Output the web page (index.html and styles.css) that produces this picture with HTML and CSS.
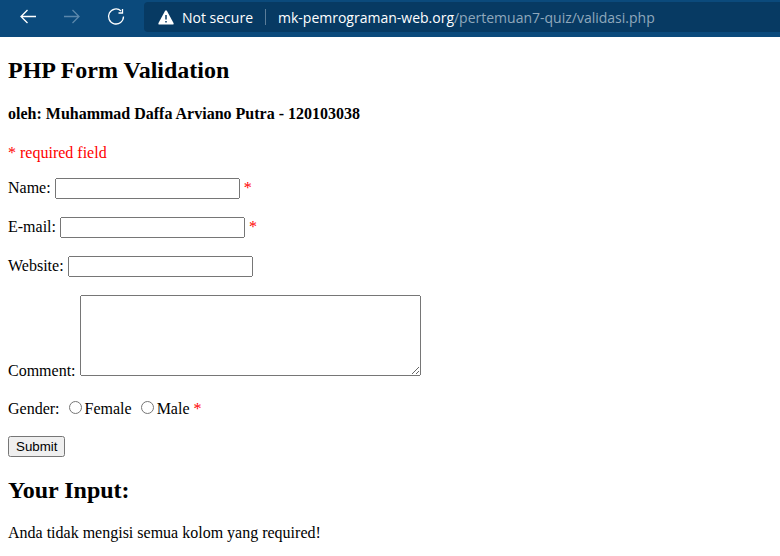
FILE: index.html
```html
<!DOCTYPE html>
<html lang="id">
<head>
<meta charset="utf-8">
<title>PHP Form Validation</title>
<link rel="stylesheet" href="styles.css">
</head>
<body>
<header class="toolbar">
  <svg class="nav" viewBox="0 0 136 37" width="136" height="37" fill="none">
    <path class="icon" d="M36 16.5H21M27.5 10l-6.5 6.5 6.500 6.500"/>
    <path class="icon dim" d="M64 16.500H79M72.500 10l6.500 6.500-6.500 6.500"/>
    <path class="icon" d="M123.500 16.500a7.500 7.500 0 1 1-2.500-5.600M122.500 9v4h-4"/>
  </svg>
  <div class="address">
    <svg class="warning" width="16" height="15" viewBox="0 0 16 15"><path d="M7 1q1-1.500 2 0l6.500 12q.5 1.500-1 1.500h-13q-1.500 0-1-1.500z" fill="#fff"/><path d="M8 5v4.500M8 11v1.500" stroke="#073a63" stroke-width="1.500"/></svg>
    <span class="security">Not secure</span>
    <span class="divider"></span>
    <span class="url"><span class="host">mk-pemrograman-web.org</span>/pertemuan7-quiz/validasi.php</span>
  </div>
</header>
<main>
  <h2>PHP Form Validation</h2>
  <h4>oleh: Muhammad Daffa Arviano Putra - 120103038</h4>
  <p class="error required">* required field</p>
  <form>
    Name: <input type="text" name="name"> <span class="error">*</span>
    <br><br>
    E-mail: <input type="text" name="email"> <span class="error">*</span>
    <br><br>
    Website: <input type="text" name="website">
    <br><br>
    Comment: <textarea name="comment" rows="5" cols="40"></textarea>
    <br><br>
    Gender:
    <input type="radio" name="gender" value="female">Female
    <input type="radio" name="gender" value="male">Male
    <span class="error">*</span>
    <br><br>
    <input type="button" value="Submit">
  </form>
  <h2 class="result">Your Input:</h2>
  <p class="message">Anda tidak mengisi semua kolom yang required!</p>
</main>
</body>
</html>
```
FILE: styles.css
```css
html { background: #fff; overflow: hidden; }
body { margin: 0; font-family: "Liberation Serif", serif; font-size: 16px; color: #000; }
.toolbar { display: flex; height: 37px; background: #0b4a7c; }
.nav { flex: none; }
.icon { stroke: #fff; stroke-width: 1.3; }
.dim { stroke: #5b87ab; }
.address { display: flex; align-items: center; flex: 1; height: 30px; margin: 2px 0 0 8px; padding-left: 14px; background: #073a63; border-radius: 4px 0 0 4px; font: 14px "Open Sans", sans-serif; color: #8fa8bc; white-space: nowrap; }
.security { margin-left: 8px; color: #fff; }
.divider { width: 1px; height: 16px; margin: 0 12px; background: #5b7d99; }
.host { color: #fff; }
main { padding: 0 8px; }
h2 { margin: 19.900px 0; font-size: 24px; }
h4 { margin: 21.280px 0; }
p { margin: 16px 0; }
.error { color: #f00; }
input, textarea { font-family: "Liberation Sans", sans-serif; font-size: 13.333px; }
textarea { font-family: "Liberation Mono", monospace; }
```
